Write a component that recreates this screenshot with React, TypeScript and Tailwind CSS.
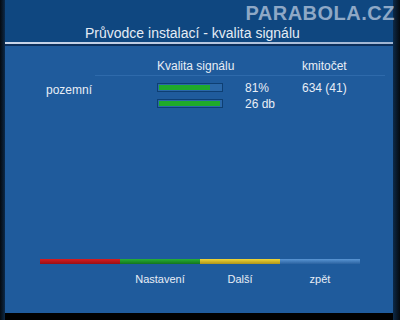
import React from 'react';

const Bar: React.FC<{ pct: number }> = ({ pct }) => (
  <div className="w-[66px] h-[9px] border border-[#0e3f73] bg-[#2a67a8] p-px">
    <div className="h-full bg-[#1faa2a]" style={{ width: `${pct}%` }} />
  </div>
);

export default function App() {
  const keys = [
    { color: 'from-[#d81c20] to-[#9a1014]', label: '' },
    { color: 'from-[#27b036] to-[#14751e]', label: 'Nastavení' },
    { color: 'from-[#f0d838] to-[#b09418]', label: 'Další' },
    { color: 'from-[#5a96d4] to-[#2a62a0]', label: 'zpět' },
  ];

  return (
    <div className="w-[400px] h-[320px] bg-black flex" style={{ fontFamily: '"Liberation Sans", Arial, sans-serif' }}>
      <div className="w-[5px] bg-gradient-to-r from-[#050a10] to-[#0c2a4a]" />
      <div className="w-[388px] h-[313px] flex flex-col">
        {/* Header */}
        <div className="h-[40px] bg-[#0f4780] relative">
          <div className="absolute right-[-2px] top-[-2px] text-[20px] font-bold tracking-[0.5px] text-[#8ea8c6]">PARABOLA.CZ</div>
          <div className="absolute left-[80px] top-[23px] text-[14px] text-[#e4ecf5]">Průvodce instalací - kvalita signálu</div>
        </div>
        <div className="h-[2px] bg-[#0f4780]" />
        <div className="h-[2px] bg-gradient-to-r from-[#c9d6ea] via-[#b8c8e0] to-[#9fb5d3]" />
        <div className="h-[2px] bg-[#0b2f5c]" />

        {/* Body */}
        <div className="flex-1 bg-[#1f5b9c] flex flex-col text-[12px] leading-[14px] text-[#e8eef6]">
          <div className="flex pt-[13px] h-[30px] border-b border-[#2e6aab] ml-[90px] mr-[8px]">
            <div className="w-[62px]" />
            <div className="w-[145px]">Kvalita signálu</div>
            <div>kmitočet</div>
          </div>

          <div className="flex mt-[7px]">
            <div className="w-[152px] pl-[41px]">pozemní</div>
            <div className="flex flex-col gap-[7px]">
              <div className="flex items-center h-[9px]">
                <Bar pct={82} />
                <span className="ml-[22px] w-[57px]">81%</span>
                <span>634 (41)</span>
              </div>
              <div className="flex items-center h-[9px]">
                <Bar pct={98} />
                <span className="ml-[22px]">26 db</span>
              </div>
            </div>
          </div>

          <div className="flex-1" />

          <div className="flex ml-[35px] mb-[27px]">
            {keys.map((k, i) => (
              <div key={i} className="w-[80px] flex flex-col items-center">
                <div className={`w-full h-[5px] bg-gradient-to-b ${k.color}`} />
                <div className="h-[14px] mt-[8px] text-[11px]">{k.label}</div>
              </div>
            ))}
          </div>
        </div>
      </div>
      <div className="flex-1 bg-gradient-to-r from-[#0c2a4a] to-[#050a10]" />
    </div>
  );
}
